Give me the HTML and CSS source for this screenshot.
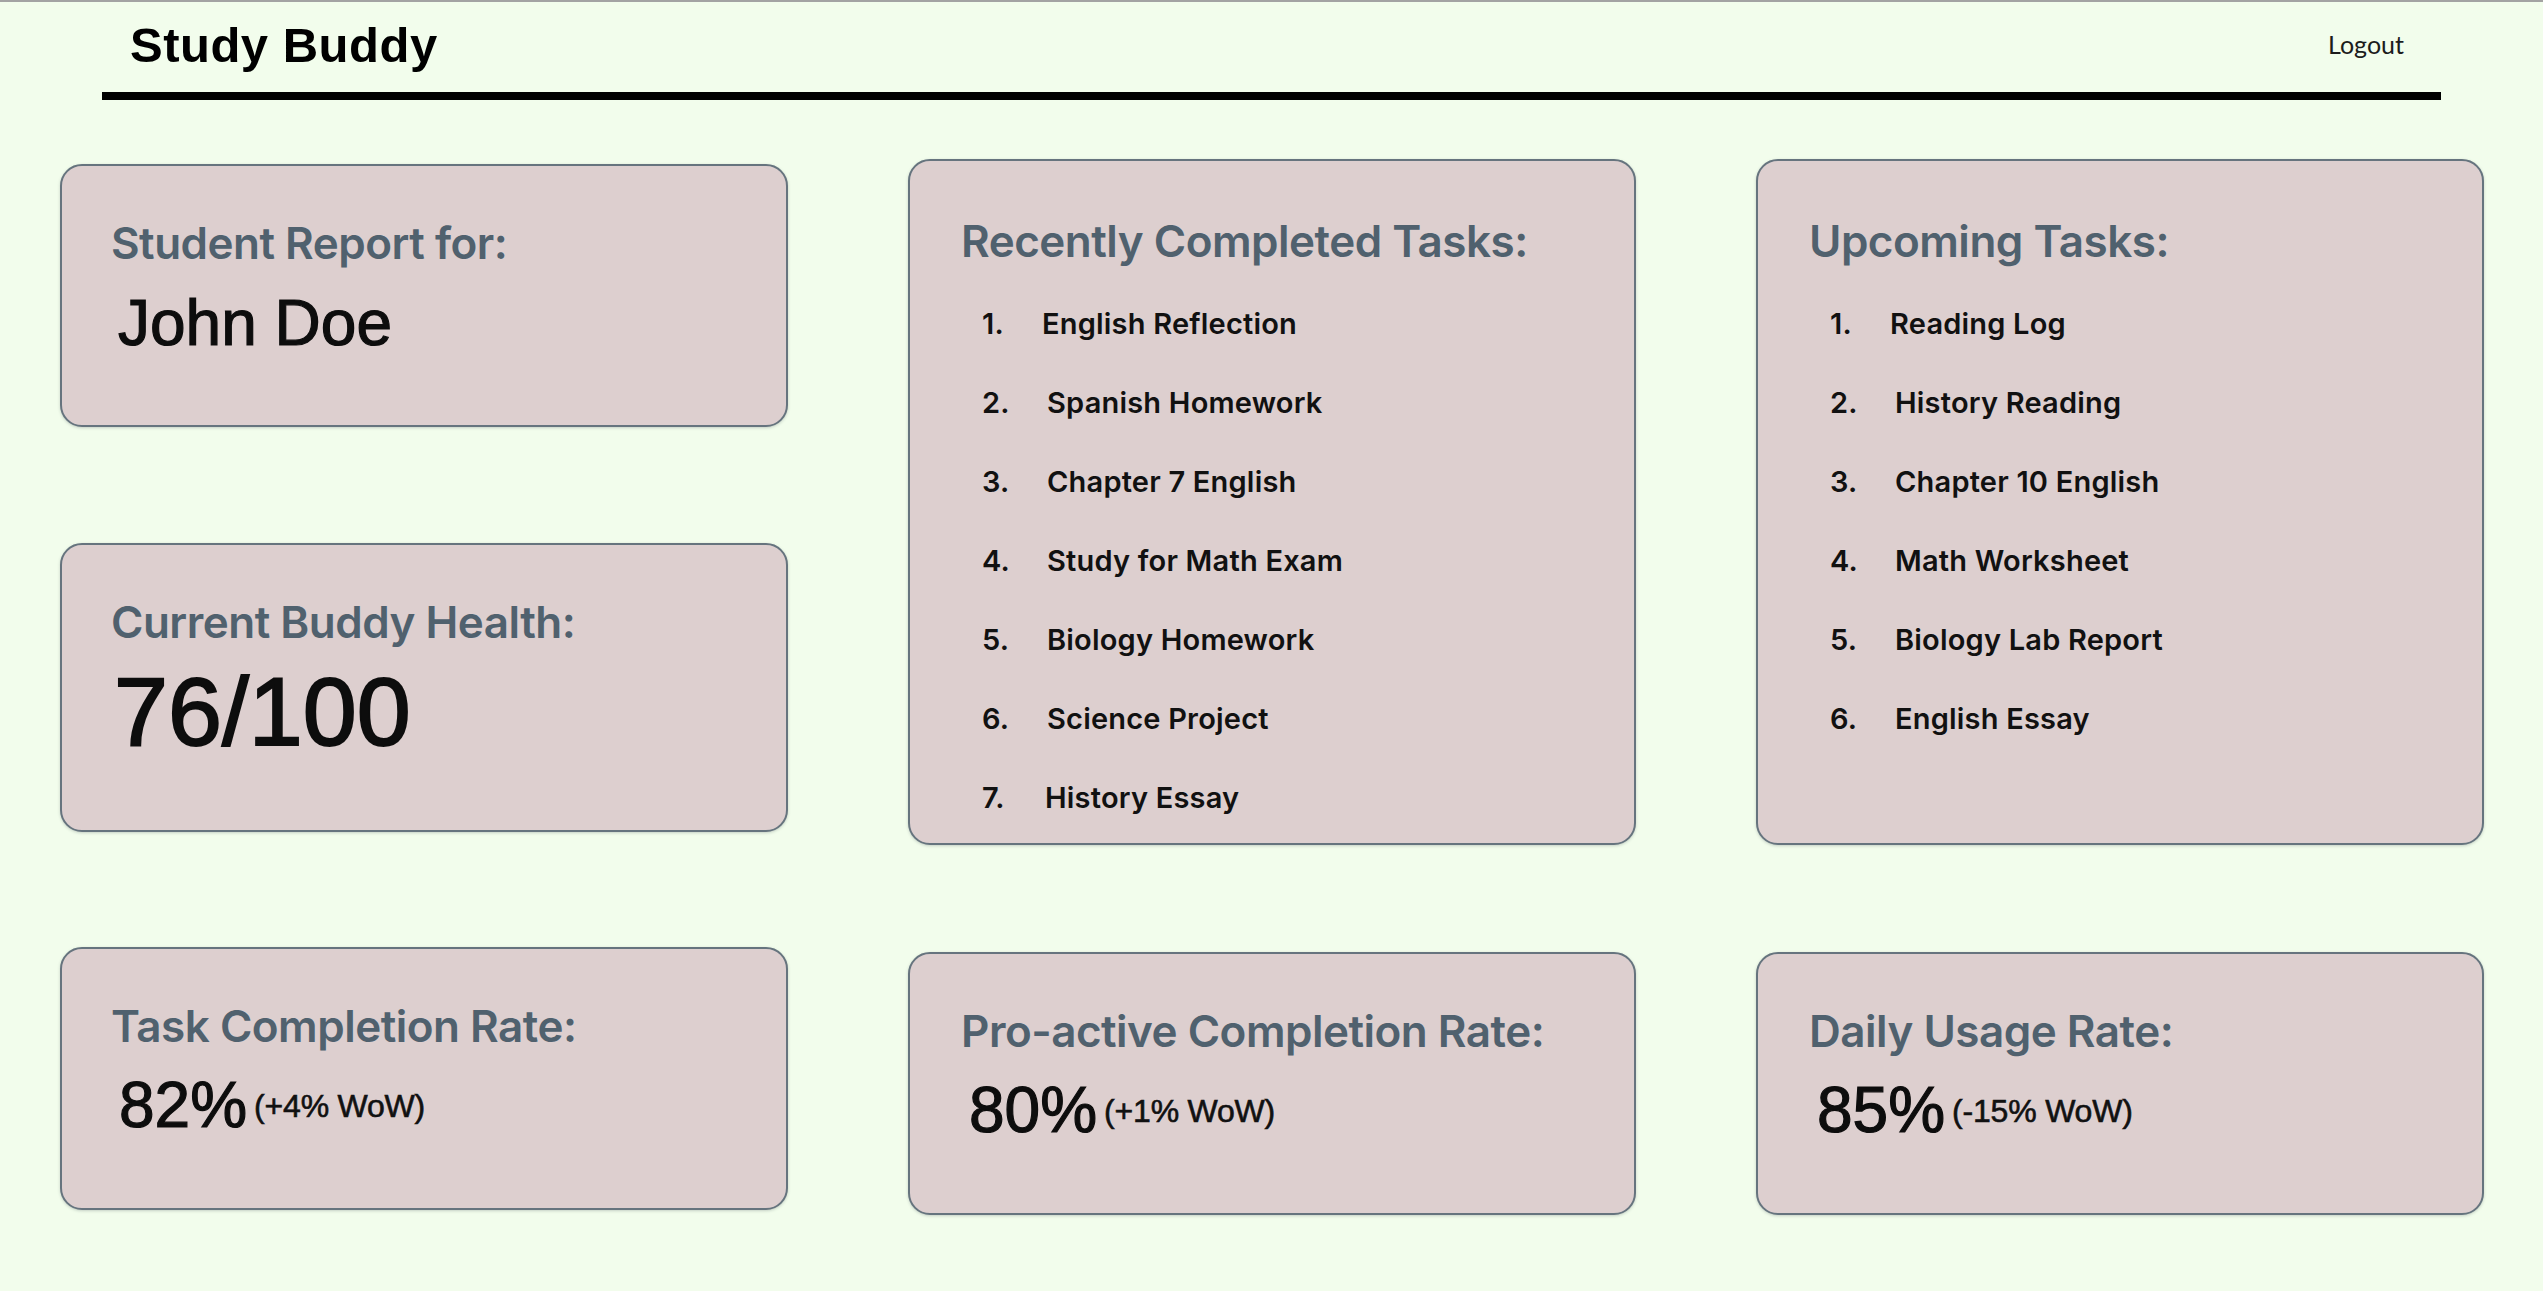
FILE: index.html
```html
<!DOCTYPE html>
<html lang="en">
<head>
<meta charset="utf-8">
<title>Study Buddy</title>
<link rel="stylesheet" href="styles.css">
</head>
<body>
<header class="topbar">
  <div class="brand">Study Buddy</div>
  <a class="logout" href="#">Logout</a>
</header>
<main class="board">
  <section class="column column-left">
    <div class="card card-short card-first">
      <h2 class="card-title">Student Report for:</h2>
      <div class="student-name">John Doe</div>
    </div>
    <div class="card card-health">
      <h2 class="card-title">Current Buddy Health:</h2>
      <div class="health-value">76/100</div>
    </div>
    <div class="card card-short card-last">
      <h2 class="card-title">Task Completion Rate:</h2>
      <div class="rate"><span class="rate-value">82%</span><span class="rate-change">(+4% WoW)</span></div>
    </div>
  </section>
  <section class="column">
    <div class="card card-tall">
      <h2 class="card-title">Recently Completed Tasks:</h2>
      <ol class="task-list">
        <li><span class="num">1.</span><span class="task task-a">English Reflection</span></li>
        <li><span class="num">2.</span><span class="task">Spanish Homework</span></li>
        <li><span class="num">3.</span><span class="task">Chapter 7 English</span></li>
        <li><span class="num">4.</span><span class="task">Study for Math Exam</span></li>
        <li><span class="num">5.</span><span class="task">Biology Homework</span></li>
        <li><span class="num">6.</span><span class="task">Science Project</span></li>
        <li><span class="num">7.</span><span class="task task-b">History Essay</span></li>
      </ol>
    </div>
    <div class="card card-short card-bottom">
      <h2 class="card-title">Pro-active Completion Rate:</h2>
      <div class="rate"><span class="rate-value">80%</span><span class="rate-change">(+1% WoW)</span></div>
    </div>
  </section>
  <section class="column">
    <div class="card card-tall">
      <h2 class="card-title">Upcoming Tasks:</h2>
      <ol class="task-list">
        <li><span class="num">1.</span><span class="task task-a">Reading Log</span></li>
        <li><span class="num">2.</span><span class="task">History Reading</span></li>
        <li><span class="num">3.</span><span class="task">Chapter 10 English</span></li>
        <li><span class="num">4.</span><span class="task">Math Worksheet</span></li>
        <li><span class="num">5.</span><span class="task">Biology Lab Report</span></li>
        <li><span class="num">6.</span><span class="task">English Essay</span></li>
      </ol>
    </div>
    <div class="card card-short card-bottom">
      <h2 class="card-title">Daily Usage Rate:</h2>
      <div class="rate"><span class="rate-value">85%</span><span class="rate-change">(-15% WoW)</span></div>
    </div>
  </section>
</main>
</body>
</html>
```
FILE: styles.css
```css
* { box-sizing: border-box; }

html, body { height: 100%; }

body {
  margin: 0;
  background: #f2fdec;
  border-top: 2px solid #a3a3a3;
  overflow: hidden;
  font-family: "Liberation Sans", Arial, sans-serif;
  color: #111;
}

.topbar {
  width: 2339px;
  margin: 0 auto;
  height: 98px;
  padding: 19px 37px 0 28px;
  display: flex;
  justify-content: space-between;
  align-items: flex-start;
  border-bottom: 8px solid #000;
}

.brand {
  font-family: "Liberation Sans", Arial, sans-serif;
  font-weight: 700;
  font-size: 49px;
  line-height: 48px;
  letter-spacing: 0.5px;
  color: #000;
}

.logout {
  margin-top: 11px;
  font-family: Lato, "Open Sans", sans-serif;
  font-size: 25px;
  line-height: 24px;
  color: #1c1c1c;
  text-decoration: none;
}

.board {
  display: flex;
  gap: 120px;
  padding: 59px 58px 0 60px;
}

.column {
  flex: 0 0 728px;
  display: flex;
  flex-direction: column;
}

.card {
  background: #ddcfcf;
  border: 2px solid #66747e;
  border-radius: 22px;
  box-shadow: 0 1px 3px rgba(60, 70, 80, 0.25);
  padding: 52px 40px 0 52px;
}

.card-first { margin-top: 5px; height: 263px; }
.card-health { margin-top: 116px; height: 289px; }
.card-last { margin-top: 115px; height: 263px; }
.card-tall { height: 686px; padding-top: 55px; padding-left: 54px; }
.card-bottom { margin-top: 107px; height: 263px; padding-left: 54px; }
.card-short { height: 263px; }

.card-title {
  margin: 0 0 0 -3px;
  font-family: Inter, "Noto Sans", sans-serif;
  font-weight: 600;
  font-size: 44px;
  line-height: 50px;
  letter-spacing: -0.5px;
  color: #50616e;
}

.student-name {
  margin-top: 23px;
  margin-left: 4px;
  font-size: 64px;
  line-height: 64px;
  color: #0d0d0d;
  -webkit-text-stroke: 1.2px #0d0d0d;
}

.health-value {
  margin-top: 17px;
  font-size: 97px;
  line-height: 96px;
  color: #0d0d0d;
  -webkit-text-stroke: 2px #0d0d0d;
}

.rate {
  margin-top: 22px;
  margin-left: 5px;
  display: flex;
  align-items: flex-start;
  gap: 7px;
}

.rate-value {
  font-size: 64px;
  line-height: 64px;
  color: #0d0d0d;
  -webkit-text-stroke: 1.2px #0d0d0d;
}

.rate-change {
  margin-top: 18px;
  font-size: 32px;
  line-height: 30px;
  letter-spacing: -0.2px;
  color: #111;
  -webkit-text-stroke: 0.6px #111;
}

.task-list {
  list-style: none;
  margin: 18px 0 0;
  padding: 0 0 0 18px;
}

.task-list li {
  display: flex;
  height: 79px;
  line-height: 79px;
  font-family: Inter, "Noto Sans", sans-serif;
  font-weight: 600;
  font-size: 29px;
  letter-spacing: 0.2px;
  color: #111;
}

.num {
  width: 65px;
  flex: 0 0 65px;
}

.task-a { margin-left: -5px; }
.task-b { margin-left: -2px; }
```
